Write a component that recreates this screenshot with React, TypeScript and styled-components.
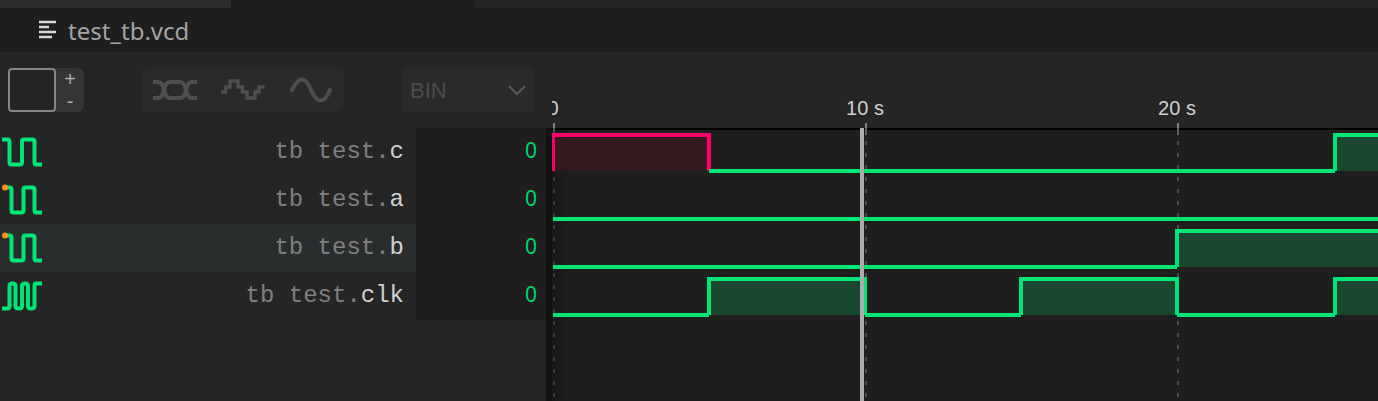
import React from "react";
import styled, { createGlobalStyle } from "styled-components";

const GREEN = "#00e676";
const PINK = "#ff0068";
const ROW = 48;

const GlobalStyle = createGlobalStyle`
  * { box-sizing: border-box; }
  body {
    margin: 0;
    background: #252526;
    font-family: "Liberation Sans", Arial, sans-serif;
  }
`;

const Page = styled.div`
  display: flex;
  flex-direction: column;
  min-height: 100vh;
  background: #252526;
`;

const TabStrip = styled.div`
  display: flex;
  height: 8px;
  background: #252526;
`;

const Tab = styled.div<{ $width: number; $active?: boolean }>`
  width: ${(p) => p.$width}px;
  background: ${(p) => (p.$active ? "#1e1e1e" : "#2d2d2d")};
`;

const Breadcrumb = styled.header`
  display: flex;
  align-items: center;
  gap: 12px;
  height: 44px;
  padding: 0 38px;
  background: #1e1e1e;
`;

const FileName = styled.h1`
  margin: 0;
  padding-top: 2px;
  font: 400 24px/32px "Noto Sans", "Segoe UI", sans-serif;
  color: #a3a3a3;
`;

const Main = styled.main`
  flex: 1;
  display: grid;
  grid-template-columns: 546px minmax(0, 1fr);
`;

const Sidebar = styled.section`
  display: flex;
  flex-direction: column;
`;

const Toolbar = styled.div`
  display: flex;
  align-items: center;
  height: 76px;
  padding: 0 12px 0 8px;
`;

const Stepper = styled.div`
  display: flex;
  height: 44px;
  border-radius: 6px;
  background: #353535;
`;

const StepInput = styled.input`
  width: 48px;
  height: 44px;
  padding: 0 6px;
  border: 2px solid #868686;
  border-radius: 4px;
  background: #252526;
  color: #d4d4d4;
  font: 20px "Liberation Sans", sans-serif;
  outline: none;
`;

const StepButtons = styled.div`
  display: flex;
  flex-direction: column;
  width: 28px;
`;

const StepButton = styled.button`
  flex: 1;
  padding: 0;
  border: 0;
  background: none;
  color: #a8a8a8;
  font: 20px/22px "Liberation Sans", sans-serif;
`;

const ModeGroup = styled.div`
  display: flex;
  align-items: center;
  justify-content: space-between;
  width: 202px;
  height: 44px;
  padding: 0 3px;
  margin-left: 58px;
  border-radius: 6px;
  background: #2a2a2a;
`;

const ModeButton = styled.button`
  display: flex;
  align-items: center;
  justify-content: center;
  width: 60px;
  height: 44px;
  padding: 0;
  border: 0;
  background: none;
  color: #4e4e4e;
`;

const SelectWrap = styled.div`
  position: relative;
  width: 132px;
  height: 44px;
  margin-left: auto;
`;

const FormatSelect = styled.select`
  appearance: none;
  width: 100%;
  height: 100%;
  padding: 0 36px 0 8px;
  border: 0;
  border-radius: 0;
  background: #2a2a2a;
  color: #4c4c4c;
  font: 22px "Liberation Sans", Arial, sans-serif;
`;

const Chevron = styled.svg`
  position: absolute;
  top: 16px;
  right: 8px;
  pointer-events: none;
`;

const SignalTable = styled.table`
  width: 100%;
  border-collapse: collapse;
`;

const SignalRow = styled.tr<{ $selected?: boolean }>`
  height: ${ROW}px;
  background: ${(p) => (p.$selected ? "#2a2d2e" : "transparent")};
`;

const IconCell = styled.td`
  width: 48px;
  padding: 0;
  svg { display: block; }
`;

const NameCell = styled.th`
  padding: 0 12px 0 0;
  text-align: right;
  font: 400 24px/28px "Liberation Mono", "Courier New", monospace;
  color: #d0d0d0;
`;

const Scope = styled.span`
  color: #7f7f7f;
`;

const ValueCell = styled.td`
  width: 130px;
  padding: 0 9px 4px 0;
  background: #1e1e1e;
  text-align: right;
  font: 21px/28px "Noto Sans", sans-serif;
  color: #00d46c;
`;

const WavePane = styled.section`
  display: flex;
  flex-direction: column;
`;

const Ruler = styled.div`
  height: 76px;
  padding-left: 6px;
`;

const Canvas = styled.div`
  flex: 1;
  display: flex;
  padding-left: 6px;
  background: linear-gradient(to right, #111 0, #111 6px, #1e1e1e 6px);
`;

const Plot = styled.svg`
  display: block;
  width: 100%;
  height: 76px;
`;

const WavePlot = styled(Plot)`
  height: auto;
  min-height: 273px;
`;

type Level = "x" | "0" | "1";
type Signal = {
  name: string;
  icon: "digital" | "watched" | "clock";
  selected?: boolean;
  wave: { at: number; level: Level }[];
};

const END = 8000;

const signals: Signal[] = [
  {
    name: "c",
    icon: "digital",
    wave: [
      { at: 1, level: "x" },
      { at: 157, level: "0" },
      { at: 783, level: "1" },
    ],
  },
  { name: "a", icon: "watched", wave: [{ at: 1, level: "0" }] },
  {
    name: "b",
    icon: "watched",
    selected: true,
    wave: [
      { at: 1, level: "0" },
      { at: 625, level: "1" },
    ],
  },
  {
    name: "clk",
    icon: "clock",
    wave: [
      { at: 1, level: "0" },
      { at: 157, level: "1" },
      { at: 313, level: "0" },
      { at: 469, level: "1" },
      { at: 625, level: "0" },
      { at: 783, level: "1" },
    ],
  },
];

const ticks = [
  { x: 2, label: "0" },
  { x: 314, label: "10 s" },
  { x: 626, label: "20 s" },
];

const iconPaths = {
  digital:
    "M2 11.5H7.5Q9.5 11.5 9.5 13.5V34.5Q9.5 36.5 11.5 36.5H20Q22 36.5 22 34.5V13.5Q22 11.5 24 11.5H32.5Q34.5 11.5 34.5 13.5V34.5Q34.5 36.5 36.5 36.5H42",
  watched:
    "M6 11.5H9.5Q11.5 11.5 11.5 13.5V34.5Q11.5 36.5 13.5 36.5H21.5Q23.5 36.5 23.5 34.5V13.5Q23.5 11.5 25.5 11.5H32.5Q34.5 11.5 34.5 13.5V34.5Q34.5 36.5 36.5 36.5H42",
  clock:
    "M2 36.5H7.5Q9.5 36.5 9.5 34.5V14Q9.5 11.5 12.5 11.5Q15.5 11.5 15.5 14V34Q15.5 36.5 18.75 36.5Q22 36.5 22 34V14Q22 11.5 25 11.5Q28 11.5 28 14V34Q28 36.5 31.25 36.5Q34.5 36.5 34.5 34V13.5Q34.5 11.5 36.5 11.5H42",
};

function SignalIcon({ kind }: { kind: Signal["icon"] }) {
  return (
    <svg width="48" height="48" aria-hidden="true">
      <path d={iconPaths[kind]} fill="none" stroke={GREEN} strokeWidth="4" />
      {kind === "watched" && <circle cx="5" cy="11.5" r="3" fill="#ff9020" />}
    </svg>
  );
}

function Wave({ signal, top }: { signal: Signal; top: number }) {
  const high = top + 7;
  const low = top + 43;
  const spans = signal.wave.map((w, i) => ({ ...w, end: signal.wave[i + 1]?.at ?? END }));
  const raised = spans.filter((s) => s.level !== "0");
  const flat = spans.filter((s) => s.level === "0");
  return (
    <g strokeWidth="4">
      {raised.map(({ at, end, level }) => (
        <g key={at}>
          <rect
            x={at}
            y={high}
            width={end - at}
            height={low - high}
            fill={level === "x" ? "#32191e" : "#1a472f"}
          />
          <path
            d={`M${at} ${low}V${high}H${end}V${low}`}
            fill="none"
            stroke={level === "x" ? PINK : GREEN}
          />
        </g>
      ))}
      {flat.map(({ at, end }) => (
        <path key={at} d={`M${at} ${low}H${end}`} stroke={GREEN} />
      ))}
    </g>
  );
}

export default function App() {
  return (
    <Page>
      <GlobalStyle />
      <TabStrip>
        <Tab $width={231} />
        <Tab $width={244} $active />
      </TabStrip>
      <Breadcrumb>
        <svg width="18" height="20" aria-hidden="true">
          <path d="M1 2H18M1 7H11M1 12H18M1 17H14" stroke="#d8d8d4" strokeWidth="2.4" />
        </svg>
        <FileName>test_tb.vcd</FileName>
      </Breadcrumb>
      <Main>
        <Sidebar>
          <Toolbar>
            <Stepper>
              <StepInput aria-label="Bit" />
              <StepButtons>
                <StepButton aria-label="Increase">+</StepButton>
                <StepButton aria-label="Decrease">-</StepButton>
              </StepButtons>
            </Stepper>
            <ModeGroup>
              <ModeButton aria-label="Bus">
                <svg width="46" height="24" fill="none" stroke="currentColor" strokeWidth="4">
                  <path d="M1 4H6C9 4 10 6 11 9L13 15C14 18 15 20 18 20H28C31 20 32 18 33 15L35 9C36 6 37 4 40 4H45" />
                  <path d="M1 20H6C9 20 10 18 11 15L13 9C14 6 15 4 18 4H28C31 4 32 6 33 9L35 15C36 18 37 20 40 20H45" />
                </svg>
              </ModeButton>
              <ModeButton aria-label="Stepped">
                <svg width="46" height="24" fill="none" stroke="currentColor" strokeWidth="3.4">
                  <path d="M1 14H5.5V9H10V3H18V9H22.5V14H27V20H35V14H39V9H44.5" />
                </svg>
              </ModeButton>
              <ModeButton aria-label="Analog">
                <svg
                  width="46"
                  height="28"
                  fill="none"
                  stroke="currentColor"
                  strokeWidth="4"
                  strokeLinecap="round"
                >
                  <path d="M4 14C11 0 17 0 23 14C29 28 36 28 42 14" />
                </svg>
              </ModeButton>
            </ModeGroup>
            <SelectWrap>
              <FormatSelect aria-label="Number format" defaultValue="BIN">
                <option>BIN</option>
                <option>HEX</option>
                <option>DEC</option>
              </FormatSelect>
              <Chevron width="18" height="12" fill="none" stroke="#5a5a5a" strokeWidth="2">
                <path d="M1 2L9 10L17 2" />
              </Chevron>
            </SelectWrap>
          </Toolbar>
          <SignalTable>
            <tbody>
              {signals.map((s) => (
                <SignalRow key={s.name} $selected={s.selected}>
                  <IconCell>
                    <SignalIcon kind={s.icon} />
                  </IconCell>
                  <NameCell scope="row">
                    <Scope>tb test.</Scope>
                    {s.name}
                  </NameCell>
                  <ValueCell>0</ValueCell>
                </SignalRow>
              ))}
            </tbody>
          </SignalTable>
        </Sidebar>
        <WavePane>
          <Ruler>
            <Plot>
              {ticks.map((t) => (
                <g key={t.x}>
                  <text
                    x={t.x - 1}
                    y="63"
                    textAnchor="middle"
                    fontFamily="Liberation Sans, Arial, sans-serif"
                    fontSize="20"
                    fill="#cfcfcf"
                  >
                    {t.label}
                  </text>
                  <path d={`M${t.x} 71V76`} stroke="#7c7c7c" strokeWidth="2" />
                </g>
              ))}
            </Plot>
          </Ruler>
          <Canvas>
            <WavePlot>
              <defs>
                <linearGradient id="edge">
                  <stop offset="0" stopColor="#000" stopOpacity="0.2" />
                  <stop offset="1" stopColor="#000" stopOpacity="0" />
                </linearGradient>
              </defs>
              <rect width="100%" height="2" fill="#000" />
              {ticks.map((t) => (
                <g key={t.x} strokeWidth="2">
                  <path d={`M${t.x} 0V7`} stroke="#5c5c5c" />
                  <path d={`M${t.x} 13V2000`} stroke="#4a4a4a" strokeDasharray="4 8" />
                </g>
              ))}
              <rect y="2" width="18" height="100%" fill="url(#edge)" />
              {signals.map((s, i) => (
                <Wave key={s.name} signal={s} top={i * ROW} />
              ))}
              <rect x="308" width="4" height="100%" fill="#adadad" />
            </WavePlot>
          </Canvas>
        </WavePane>
      </Main>
    </Page>
  );
}
